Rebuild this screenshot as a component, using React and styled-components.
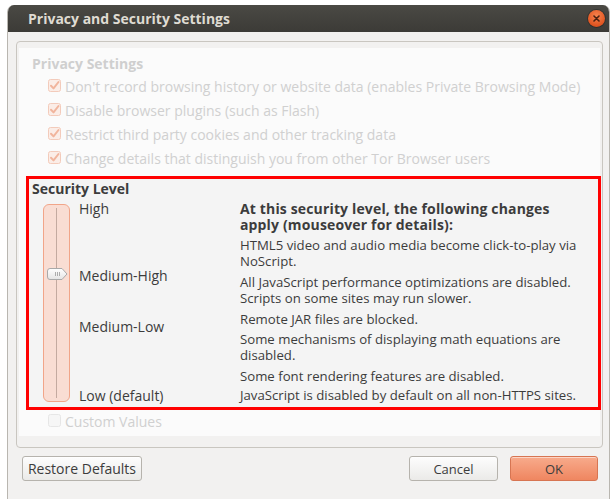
import React from "react";
import styled, { createGlobalStyle } from "styled-components";

const Global = createGlobalStyle`
  html, body { margin: 0; padding: 0; background: #ffffff; }
  body { font-family: "Open Sans", "Noto Sans", sans-serif; font-size: 13px; color: #3c3c3c; }
  * { box-sizing: border-box; }
`;

const Window = styled.div`
  width: 603px;
  height: 494px;
  margin: 5px 0 0 7px;
  display: flex;
  flex-direction: column;
  background: #f2f1f0;
  border-left: 1px solid #b9b6b0;
  border-right: 1px solid #b9b6b0;
  border-radius: 7px 7px 0 0;
  overflow: hidden;
`;

const TitleBar = styled.div`
  height: 27px;
  flex: none;
  display: flex;
  align-items: center;
  justify-content: space-between;
  padding: 0 4px 0 20px;
  background: linear-gradient(#4a4944, #3c3b37);
`;

const Title = styled.div`
  font-weight: 700;
  font-size: 14px;
  color: #dfdbd2;
`;

const CloseBtn = styled.div`
  width: 17px;
  height: 17px;
  border-radius: 50%;
  background: radial-gradient(circle at 50% 35%, #f6844f, #e05420 70%, #c9441a);
  display: flex;
  align-items: center;
  justify-content: center;
  box-shadow: 0 0 0 1px rgba(0,0,0,0.25);
`;

const Body = styled.div`
  flex: 1;
  padding: 9px 6px 0 8px;
  display: flex;
  flex-direction: column;
`;

const Group = styled.div`
  height: 407px;
  border: 1px solid #c9c6c0;
  border-radius: 4px;
  padding: 6px 2px 11px 2px;
  display: flex;
`;

const Panel = styled.div`
  flex: 1;
  background: #fbfbfb;
  padding-top: 7px;
  display: flex;
  flex-direction: column;
`;

const Heading = styled.div`
  font-weight: 700;
  font-size: 14px;
  line-height: 18px;
  margin-left: 13px;
  color: #cfcfcf;
`;

const CheckRows = styled.div`
  margin: 1px 0 0 29px;
  display: flex;
  flex-direction: column;
`;

const CheckRow = styled.div`
  height: ${(p) => p.$h || 24}px;
  display: flex;
  align-items: center;
  gap: 3px;
  font-size: 14px;
  color: #d0d0d0;
  white-space: nowrap;
`;

const Highlight = styled.div`
  margin: 6px -1px 0 7px;
  height: 234px;
  border: 3px solid #f00;
  background: #f4f4f4;
  padding: 2px 0 0 3px;
  display: flex;
  flex-direction: column;
`;

const SecHeading = styled.div`
  font-weight: 700;
  font-size: 14px;
  line-height: 16px;
  color: #3c3c3c;
`;

const SecRow = styled.div`
  margin-top: 4px;
  display: flex;
`;

const Track = styled.div`
  position: relative;
  margin: 3px 0 0 11px;
  width: 27px;
  height: 198px;
  border: 1px solid #f1a589;
  border-radius: 6px;
  background: #f9ddd3;
  &::before {
    content: "";
    position: absolute;
    left: 12px;
    top: 3px;
    bottom: 3px;
    width: 1px;
    background: #c4aaa0;
  }
`;

const Thumb = styled.svg`
  position: absolute;
  left: 3px;
  top: 63px;
`;

const Labels = styled.div`
  margin-left: 9px;
  width: 161px;
  display: flex;
  flex-direction: column;
`;

const Label = styled.div`
  font-size: 14px;
  line-height: 16px;
  margin-top: ${(p) => p.$mt || 0}px;
  white-space: nowrap;
`;

const Desc = styled.div`
  display: flex;
  flex-direction: column;
`;

const DescHead = styled.div`
  font-weight: 700;
  font-size: 14px;
  letter-spacing: 0.15px;
  line-height: 16px;
  white-space: nowrap;
  color: #3c3c3c;
`;

const Para = styled.div`
  font-size: 13.2px;
  line-height: 16px;
  margin-top: ${(p) => p.$mt}px;
  white-space: nowrap;
`;

const ButtonRow = styled.div`
  margin-top: 8px;
  padding: 0 5px 0 6px;
  display: flex;
  align-items: center;
  gap: 12px;
`;

const Spacer = styled.div`
  flex: 1;
`;

const Button = styled.button`
  height: 25px;
  width: ${(p) => p.$w}px;
  font-family: inherit;
  font-size: ${(p) => p.$fs || 13}px;
  color: #3c3c3c;
  border-radius: 3px;
  padding: 0;
  border: 1px solid ${(p) => (p.$primary ? "#d77552" : "#b6b3ad")};
  background: ${(p) =>
    p.$primary
      ? "linear-gradient(#f8ab8c, #ef8660)"
      : "linear-gradient(#fdfdfd, #ebeae8)"};
  box-shadow: inset 0 1px 0 rgba(255,255,255,0.5);
`;

const Checkbox = ({ checked }) => (
  <svg width="14" height="14" viewBox="0 0 14 14">
    <rect
      x="0.5"
      y="0.5"
      width="12"
      height="12"
      rx="2"
      fill={checked ? "#fbede7" : "#f6f6f6"}
      stroke={checked ? "#f3cbbb" : "#e6e6e6"}
    />
    {checked && (
      <path
        d="M3 6.8 L5.5 9.4 L10.5 3"
        fill="none"
        stroke="#f1b59d"
        strokeWidth="2"
        strokeLinecap="round"
        strokeLinejoin="round"
      />
    )}
  </svg>
);

const privacyItems = [
  "Don't record browsing history or website data (enables Private Browsing Mode)",
  "Disable browser plugins (such as Flash)",
  "Restrict third party cookies and other tracking data",
  "Change details that distinguish you from other Tor Browser users",
];

export default function App() {
  return (
    <>
      <Global />
      <Window>
        <TitleBar>
          <Title>Privacy and Security Settings</Title>
          <CloseBtn>
            <svg width="7" height="7" viewBox="0 0 7 7">
              <path d="M1 1 L6 6 M6 1 L1 6" stroke="#4a2010" strokeWidth="1.6" strokeLinecap="round" />
            </svg>
          </CloseBtn>
        </TitleBar>
        <Body>
          <Group>
            <Panel>
              <Heading>Privacy Settings</Heading>
              <CheckRows>
                {privacyItems.map((t) => (
                  <CheckRow key={t}>
                    <Checkbox checked />
                    <span>{t}</span>
                  </CheckRow>
                ))}
              </CheckRows>
              <Highlight>
                <SecHeading>Security Level</SecHeading>
                <SecRow>
                  <Track>
                    <Thumb width="21" height="12" viewBox="0 0 21 12">
                      <defs>
                        <linearGradient id="tg" x1="0" y1="0" x2="0" y2="1">
                          <stop offset="0" stopColor="#ffffff" />
                          <stop offset="1" stopColor="#e4e4e4" />
                        </linearGradient>
                      </defs>
                      <path
                        d="M3 0.5 H15 L20 6 L15 11.5 H3 Q0.5 11.5 0.5 9 V3 Q0.5 0.5 3 0.5 Z"
                        fill="url(#tg)"
                        stroke="#a9a9a9"
                      />
                      <path d="M8.5 4 V8 M10.5 4 V8 M12.5 4 V8" stroke="#9a9a9a" strokeWidth="0.8" />
                    </Thumb>
                  </Track>
                  <Labels>
                    <Label>High</Label>
                    <Label $mt={51}>Medium-High</Label>
                    <Label $mt={35}>Medium-Low</Label>
                    <Label $mt={53}>Low (default)</Label>
                  </Labels>
                  <Desc>
                    <DescHead>
                      At this security level, the following changes
                      <br />
                      apply (mouseover for details):
                    </DescHead>
                    <Para $mt={4}>
                      HTML5 video and audio media become click-to-play via
                      <br />
                      NoScript.
                    </Para>
                    <Para $mt={5}>
                      All JavaScript performance optimizations are disabled.
                      <br />
                      Scripts on some sites may run slower.
                    </Para>
                    <Para $mt={5}>Remote JAR files are blocked.</Para>
                    <Para $mt={4}>
                      Some mechanisms of displaying math equations are
                      <br />
                      disabled.
                    </Para>
                    <Para $mt={5}>Some font rendering features are disabled.</Para>
                    <Para $mt={3}>JavaScript is disabled by default on all non-HTTPS sites.</Para>
                  </Desc>
                </SecRow>
              </Highlight>
              <CheckRows>
                <CheckRow $h={20}>
                  <Checkbox />
                  <span>Custom Values</span>
                </CheckRow>
              </CheckRows>
            </Panel>
          </Group>
          <ButtonRow>
            <Button $w={120} $fs={14}>Restore Defaults</Button>
            <Spacer />
            <Button $w={89}>Cancel</Button>
            <Button $w={88} $primary>
              OK
            </Button>
          </ButtonRow>
        </Body>
      </Window>
    </>
  );
}
